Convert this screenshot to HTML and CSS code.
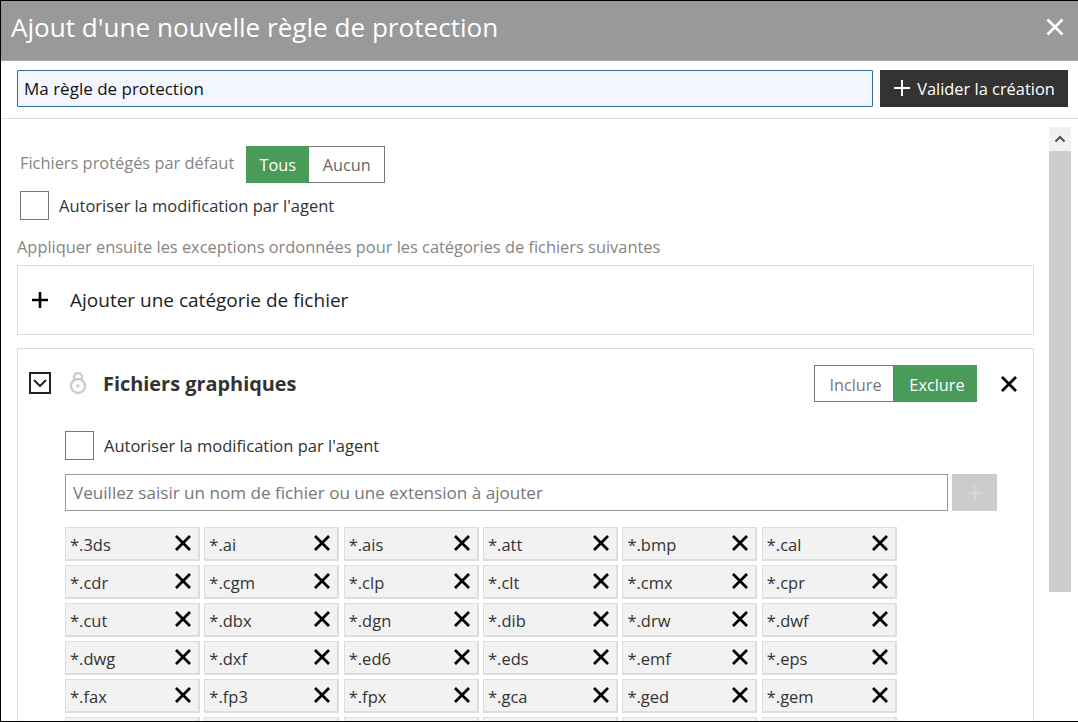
FILE: index.html
```html
<!DOCTYPE html>
<html lang="fr">
<head>
  <meta charset="UTF-8">
  <title>Ajout d'une nouvelle règle de protection</title>
  <link rel="stylesheet" href="styles.css">
</head>
<body>
  <div class="dialog">
    <header class="dialog-head">
      <h1>Ajout d'une nouvelle règle de protection</h1>
      <svg class="close-main" width="20" height="20" viewBox="0 0 20 20"><path d="M2.500 2.500 17.500 17.500M17.500 2.500 2.500 17.500"/></svg>
    </header>

    <div class="name-row">
      <input class="name-input" type="text" value="Ma règle de protection">
      <button class="btn-validate" type="button">
        <svg width="18" height="18" viewBox="0 0 18 18"><path d="M9 1V17M1 9H17"/></svg>
        Valider la création
      </button>
    </div>

    <div class="dialog-body">
      <div class="content">
        <div class="default-row">
          <span class="muted">Fichiers protégés par défaut</span>
          <div class="toggle">
            <span class="toggle-item on">Tous</span>
            <span class="toggle-item off">Aucun</span>
          </div>
        </div>
        <div class="check-row">
          <span class="checkbox"></span>
          <span>Autoriser la modification par l'agent</span>
        </div>
        <p class="muted hint">Appliquer ensuite les exceptions ordonnées pour les catégories de fichiers suivantes</p>

        <div class="add-category">
          <svg width="18" height="18" viewBox="0 0 18 18"><path d="M9 1V17M1 9H17"/></svg>
          <span>Ajouter une catégorie de fichier</span>
        </div>

        <section class="category">
          <div class="category-head">
            <span class="collapse">
              <svg width="14" height="8" viewBox="0 0 14 8"><path d="M1 1 7 7 13 1"/></svg>
            </span>
            <svg class="lock" width="18" height="24" viewBox="0 0 18 24"><path d="M5 9V5A4 4 0 0 1 13 5V9"/><circle cx="9" cy="14" r="7"/><circle class="lock-dot" cx="9" cy="14" r="1.200"/></svg>
            <h2>Fichiers graphiques</h2>
            <div class="toggle toggle-right">
              <span class="toggle-item off first">Inclure</span>
              <span class="toggle-item on">Exclure</span>
            </div>
            <svg class="cross" width="18" height="18" viewBox="0 0 18 18"><path d="M2 2 16 16M16 2 2 16"/></svg>
          </div>

          <div class="category-body">
            <div class="check-row">
              <span class="checkbox"></span>
              <span>Autoriser la modification par l'agent</span>
            </div>
            <div class="ext-row">
              <input class="ext-input" type="text" placeholder="Veuillez saisir un nom de fichier ou une extension à ajouter">
              <span class="ext-add">
                <svg width="16" height="16" viewBox="0 0 16 16"><path d="M8 1V15M1 8H15"/></svg>
              </span>
            </div>
            <div class="chips" id="chips"></div>
          </div>
        </section>
      </div>

      <div class="scrollbar">
        <span class="scroll-up">
          <svg width="12" height="8" viewBox="0 0 12 8"><path d="M1.500 6.500 6 2 10.500 6.500"/></svg>
        </span>
        <span class="scroll-thumb"></span>
      </div>
    </div>
  </div>

  <script>
    const exts = ['3ds','ai','ais','att','bmp','cal','cdr','cgm','clp','clt','cmx','cpr',
      'cut','dbx','dgn','dib','drw','dwf','dwg','dxf','ed6','eds','emf','eps',
      'fax','fp3','fpx','gca','ged','gem'];
    const chips = document.getElementById('chips');
    exts.forEach((ext) => {
      const chip = document.createElement('div');
      chip.className = 'chip';
      chip.innerHTML = '<span>*.' + ext + '</span>' +
        '<svg class="cross" width="18" height="18" viewBox="0 0 18 18"><path d="M2 2 16 16M16 2 2 16"/></svg>';
      chips.appendChild(chip);
    });
    // la rangée suivante n'est visible que par son bord haut
    for (let i = 0; i < 6; i++) {
      const chip = document.createElement('div');
      chip.className = 'chip';
      chips.appendChild(chip);
    }
  </script>
</body>
</html>
```
FILE: styles.css
```css
* {
  box-sizing: border-box;
}

html, body {
  height: 100%;
  margin: 0;
}

body {
  font-family: "Open Sans", sans-serif;
  font-size: 16.400px;
  color: #333;
  background: #fff;
  overflow: hidden;
}

svg {
  fill: none;
  stroke: currentColor;
  flex: none;
}

.dialog {
  height: 100vh;
  display: flex;
  flex-direction: column;
  border: 1px solid #000;
  border-width: 1px 0 1px 1px;
  overflow: hidden;
}

.dialog-head {
  height: 60px;
  flex: none;
  background: #999;
  color: #fff;
  display: flex;
  align-items: center;
  justify-content: space-between;
  padding: 0 13px 8px 10px;
  box-shadow: inset 0 -1px 0 #aaa;
}

.dialog-head h1 {
  margin: 0;
  font-size: 26.100px;
  font-weight: 400;
}

.close-main {
  stroke-width: 2.600;
}

.name-row {
  height: 58px;
  flex: none;
  display: flex;
  align-items: center;
  gap: 7px;
  padding: 0 10px 3px 16px;
  border-bottom: 1px solid #ddd;
}

.name-input {
  flex: 1;
  height: 37px;
  border: 1px solid #336c9f;
  border-radius: 1px;
  background: #f4f6ff;
  padding: 0 6px;
  font: 17px "Open Sans", sans-serif;
  color: #111;
}

.btn-validate {
  width: 188px;
  height: 37px;
  border: 0;
  background: #333;
  color: #fff;
  font: 16.400px "Open Sans", sans-serif;
  display: flex;
  align-items: center;
  justify-content: center;
  gap: 6px;
  padding: 0;
}

.btn-validate svg {
  stroke-width: 2;
}

.dialog-body {
  flex: 1;
  min-height: 0;
  display: flex;
  overflow: hidden;
}

.content {
  width: 1017px;
  flex: none;
  margin-left: 16px;
  padding-top: 26px;
}

.muted {
  color: #858585;
}

.default-row {
  display: flex;
  align-items: center;
  gap: 12px;
  padding-left: 3px;
  height: 38px;
}

.default-row .muted {
  padding-bottom: 3px;
}

.toggle {
  display: flex;
  height: 37px;
  font-size: 16.300px;
}

.toggle-item {
  display: flex;
  align-items: center;
  justify-content: center;
  padding-top: 2px;
}

.toggle-item.on {
  background: #4a9b59;
  color: #fff;
}

.toggle-item.off {
  background: #fff;
  color: #666;
  border: 1px solid #777;
  border-left: 0;
}

.default-row .on {
  width: 63px;
}

.default-row .off {
  width: 76px;
}

.check-row {
  display: flex;
  align-items: center;
  gap: 10px;
  height: 29px;
  margin: 8px 0 0 3px;
  font-size: 16.500px;
  color: #333;
}

.checkbox {
  width: 29px;
  height: 29px;
  border: 1px solid #777;
  background: #fff;
}

.hint {
  margin: 17px 0 0;
  height: 24px;
  line-height: 20px;
}

.add-category {
  height: 70px;
  margin-top: 4px;
  border: 1px solid #ddd;
  display: flex;
  align-items: center;
  gap: 21px;
  padding-left: 13px;
  font-size: 19px;
  color: #222;
}

.add-category svg {
  stroke-width: 2.600;
  color: #000;
}

.category {
  margin-top: 13px;
  border: 1px solid #ddd;
  border-bottom: 0;
  padding: 16px 0 0 11px;
}

.category-head {
  display: flex;
  align-items: center;
  height: 37px;
}

.collapse {
  width: 22px;
  height: 22px;
  border: 2px solid #222;
  display: flex;
  align-items: center;
  justify-content: center;
  margin: 0 18px 2px 0;
  flex: none;
}

.collapse svg {
  stroke-width: 2;
  color: #222;
}

.lock {
  color: #ccc;
  stroke-width: 2.400;
  margin-right: 16px;
}

.lock-dot {
  stroke-width: 1;
  fill: #ccc;
}

.category-head h2 {
  margin: 0;
  flex: 1;
  font-size: 19.900px;
  font-weight: 700;
  color: #333;
}

.toggle-right .first {
  width: 80px;
  padding-left: 3px;
  border-left: 1px solid #777;
  color: #777;
}

.toggle-right .on {
  width: 83px;
  padding-left: 3px;
}

.toggle-right {
  margin-right: 23px;
}

.cross {
  stroke-width: 2.800;
  color: #000;
}

.category-head .cross {
  margin-right: 15px;
}

.category-body {
  padding: 29px 0 0 36px;
}

.category-body .check-row {
  margin: 0;
}

.ext-row {
  display: flex;
  gap: 4px;
  margin-top: 14px;
}

.ext-input {
  width: 883px;
  height: 37px;
  border: 1px solid #999;
  padding: 0 7px;
  font: 17.100px "Open Sans", sans-serif;
  background: #fff;
}

.ext-input::placeholder {
  color: #777;
  opacity: 1;
}

.ext-add {
  width: 45px;
  height: 37px;
  background: #ccc;
  color: #d8d8d8;
  display: flex;
  align-items: center;
  justify-content: center;
}

.ext-add svg {
  stroke-width: 2;
}

.chips {
  display: grid;
  grid-template-columns: repeat(6, 135px);
  column-gap: 4.350px;
  row-gap: 4px;
  margin-top: 16px;
}

.chip {
  height: 34px;
  background: #f2f2f2;
  border: 1px solid #ddd;
  border-width: 1px 2px 2px 1px;
  display: flex;
  align-items: center;
  justify-content: space-between;
  padding: 0 6px 0 4px;
  font-size: 16.500px;
  color: #333;
}

.chip span {
  padding-top: 2px;
}

.chip .cross {
  margin-bottom: 2px;
}

.scrollbar {
  width: 22px;
  margin: 8px 0 0 15px;
  display: flex;
  flex-direction: column;
  flex: none;
}

.scroll-up {
  height: 24px;
  background: #f1f1f1;
  display: flex;
  align-items: center;
  justify-content: center;
  color: #505050;
}

.scroll-up svg {
  stroke-width: 2;
}

.scroll-thumb {
  width: 22px;
  height: 441px;
  background: #cdcdcd;
}
```
